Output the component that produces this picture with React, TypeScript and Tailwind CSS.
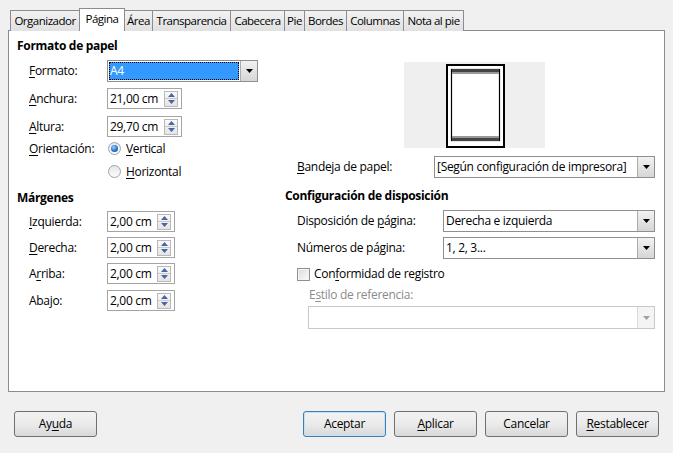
import React from "react";

const U = ({ c }: { c: string }) => (
  <span className="underline underline-offset-[2px] decoration-1">{c}</span>
);

const Arrow = ({ color = "#000" }: { color?: string }) => (
  <svg width="7" height="4" viewBox="0 0 7 4">
    <path d="M0 0H7L3.5 4Z" fill={color} />
  </svg>
);

const DropBtn = ({ disabled = false }: { disabled?: boolean }) => (
  <div
    className={`w-[17px] h-full flex items-center justify-center border-l ${
      disabled ? "border-[#d9d9d9] bg-[#f4f4f4]" : "border-[#acacac] bg-gradient-to-b from-[#f2f2f2] to-[#d6d6d6]"
    }`}
  >
    <Arrow color={disabled ? "#a0a0a0" : "#000"} />
  </div>
);

const Select = ({
  value,
  w,
  h = 22,
  disabled = false,
}: {
  value: string;
  w: string;
  h?: number;
  disabled?: boolean;
}) => (
  <div
    className={`${w} flex items-stretch border bg-white ${disabled ? "border-[#c8c8c8]" : "border-[#8e8f8f]"}`}
    style={{ height: h }}
  >
    <div className="flex-1 flex items-center pl-[2px] whitespace-nowrap overflow-hidden">{value}</div>
    <DropBtn disabled={disabled} />
  </div>
);

const Spin = ({ value, w }: { value: string; w: string }) => (
  <div className={`${w} h-[21px] flex items-center border border-[#a4a4a4] bg-white pl-[2px] pr-[3px]`}>
    <div className="flex-1 whitespace-nowrap">{value}</div>
    <div className="w-[14px] h-[16px] flex flex-col border border-[#b9b9b9] bg-gradient-to-b from-[#fafafa] to-[#e4e4e4]">
      <div className="flex-1 flex items-center justify-center border-b border-[#c9c9c9]">
        <svg width="7" height="4" viewBox="0 0 7 4">
          <path d="M0 4H7L3.5 0Z" fill="#4b64a3" />
        </svg>
      </div>
      <div className="flex-1 flex items-center justify-center">
        <Arrow color="#4b64a3" />
      </div>
    </div>
  </div>
);

const Radio = ({ checked }: { checked: boolean }) => (
  <div className="w-[13px] h-[13px] rounded-full border border-[#a2a2a2] bg-gradient-to-b from-[#e6e6e6] to-[#fbfbfb] flex items-center justify-center">
    {checked && (
      <div className="w-[7px] h-[7px] rounded-full bg-[radial-gradient(circle_at_40%_35%,#9fd3ff_0%,#2a79d6_50%,#0e3f8a_100%)]" />
    )}
  </div>
);

const Row = ({ top, h, children, className = "" }: { top: number; h: number; children: React.ReactNode; className?: string }) => (
  <div className={`flex items-center ${className}`} style={{ marginTop: top, height: h }}>
    {children}
  </div>
);

const Btn = ({ children, focus = false }: { children: React.ReactNode; focus?: boolean }) => (
  <div
    className={`w-[83px] h-[26px] rounded-[3px] border flex items-center justify-center bg-gradient-to-b from-[#f2f2f2] via-[#ebebeb] to-[#d8d8d8] ${
      focus ? "border-[#3c7fb1] shadow-[inset_0_0_0_1px_#bfe4f9]" : "border-[#707070]"
    }`}
  >
    {children}
  </div>
);

const tabs: [string, number][] = [
  ["Organizador", 70],
  ["Página", 44],
  ["Área", 29],
  ["Transparencia", 79],
  ["Cabecera", 55],
  ["Pie", 21],
  ["Bordes", 43],
  ["Columnas", 58],
  ["Nota al pie", 61],
];

export default function App() {
  return (
    <div
      className="w-[673px] h-[453px] bg-[#f0f0f0] text-[12px] text-black overflow-hidden"
      style={{ fontFamily: '"Segoe UI", "Open Sans", sans-serif', letterSpacing: "-0.3px" }}
    >
      {/* tabs */}
      <div className="flex items-end h-[31px] pl-[10px] pt-[8px] text-[11.5px] tracking-[-0.5px]">
        {tabs.map(([t, w], i) =>
          i === 1 ? (
            <div
              key={t}
              className="h-[23px] -mx-[1px] relative z-10 bg-white border border-b-0 border-[#898c95] flex items-center justify-center pb-[2px] whitespace-nowrap"
              style={{ width: w + 2 }}
            >
              {t}
            </div>
          ) : (
            <div
              key={t}
              className="h-[21px] border border-b-0 border-[#898c95] bg-gradient-to-b from-[#f2f2f2] to-[#e1e1e1] flex items-center justify-center whitespace-nowrap overflow-hidden"
              style={{ width: w, marginLeft: i === 0 ? 0 : i === 2 ? 0 : -1 }}
            >
              {t}
            </div>
          )
        )}
      </div>
      {/* panel */}
      <div className="ml-[8px] w-[657px] h-[362px] -mt-px bg-white border border-[#898c95] flex">
        {/* left column */}
        <div className="w-[276px] flex flex-col pl-[8px]">
          <Row top={7} h={16} className="font-bold">Formato de papel</Row>
          <Row top={6} h={22} className="pl-[12px]">
            <div className="w-[78px]"><U c="F" />ormato:</div>
            <div className="w-[151px] h-[22px] flex items-stretch border border-[#8e8f8f] bg-white">
              <div className="flex-1 m-[1px] bg-[#3399ff] outline-1 outline-dotted outline-[#000] -outline-offset-1 text-white flex items-center pl-[1px]">
                A4
              </div>
              <DropBtn />
            </div>
          </Row>
          <Row top={6} h={21} className="pl-[12px]">
            <div className="w-[78px]"><U c="A" />nchura:</div>
            <Spin value="21,00 cm" w="w-[75px]" />
          </Row>
          <Row top={7} h={21} className="pl-[12px]">
            <div className="w-[78px]"><U c="A" />ltura:</div>
            <Spin value="29,70 cm" w="w-[75px]" />
          </Row>
          <Row top={1} h={21} className="pl-[12px]">
            <div className="w-[79px]"><U c="O" />rientación:</div>
            <Radio checked />
            <span className="ml-[5px]"><U c="V" />ertical</span>
          </Row>
          <Row top={2} h={21} className="pl-[91px]">
            <Radio checked={false} />
            <span className="ml-[5px]"><U c="H" />orizontal</span>
          </Row>
          <Row top={8} h={16} className="font-bold">Márgenes</Row>
          <Row top={5} h={21} className="pl-[12px]">
            <div className="w-[78px]"><U c="I" />zquierda:</div>
            <Spin value="2,00 cm" w="w-[68px]" />
          </Row>
          <Row top={5} h={21} className="pl-[12px]">
            <div className="w-[78px]"><U c="D" />erecha:</div>
            <Spin value="2,00 cm" w="w-[68px]" />
          </Row>
          <Row top={5} h={21} className="pl-[12px]">
            <div className="w-[78px]">A<U c="r" />riba:</div>
            <Spin value="2,00 cm" w="w-[68px]" />
          </Row>
          <Row top={6} h={21} className="pl-[12px]">
            <div className="w-[78px]">Aba<U c="j" />o:</div>
            <Spin value="2,00 cm" w="w-[68px]" />
          </Row>
        </div>
        {/* right column */}
        <div className="flex-1 flex flex-col pr-[9px]">
          <div className="ml-[119px] mt-[31px] w-[141px] h-[86px] bg-[#efefef]">
            <svg width="141" height="86" viewBox="0 0 141 86">
              <rect x="43" y="3" width="57" height="82" fill="#fff" stroke="#000" strokeWidth="2" />
              <rect x="47.5" y="7.5" width="48" height="71" fill="#fff" stroke="#000" strokeWidth="1.2" />
              <rect x="48" y="7" width="47" height="3" fill="#444" />
              <rect x="48" y="10" width="47" height="2" fill="#999" />
              <rect x="48" y="74" width="47" height="2" fill="#999" />
              <rect x="48" y="76" width="47" height="3" fill="#444" />
            </svg>
          </div>
          <Row top={8} h={22} className="pl-[12px]">
            <div className="w-[137px]"><U c="B" />andeja de papel:</div>
            <Select value="[Según configuración de impresora]" w="flex-1" />
          </Row>
          <Row top={10} h={16} className="font-bold">Configuración de disposición</Row>
          <Row top={6} h={22} className="pl-[12px]">
            <div className="w-[146px]">Disposición de <U c="p" />ágina:</div>
            <Select value="Derecha e izquierda" w="flex-1" />
          </Row>
          <Row top={5} h={22} className="pl-[12px]">
            <div className="w-[146px]">Números de pá<U c="g" />ina:</div>
            <Select value="1, 2, 3..." w="flex-1" />
          </Row>
          <Row top={5} h={20} className="pl-[12px]">
            <div className="w-[13px] h-[13px] border border-[#8f8f8f] bg-gradient-to-br from-[#dcdcdc] to-[#fbfbfb] shadow-[inset_0_0_0_1px_#f4f4f4]" />
            <span className="ml-[4px]">Con<U c="f" />ormidad de registro</span>
          </Row>
          <Row top={3} h={16} className="pl-[24px] text-[#8b8b8b]">
            E<U c="s" />tilo de referencia:
          </Row>
          <div className="pl-[23px] mt-[3px]">
            <Select value="" w="w-full" h={23} disabled />
          </div>
        </div>
      </div>
      {/* buttons */}
      <div className="flex items-center mt-[19px] pl-[14px] pr-[14px]">
        <Btn>Ay<U c="u" />da</Btn>
        <div className="flex-1" />
        <div className="flex gap-[8px]">
          <Btn focus>Aceptar</Btn>
          <Btn><U c="A" />plicar</Btn>
          <Btn>Cancelar</Btn>
          <Btn><U c="R" />establecer</Btn>
        </div>
      </div>
    </div>
  );
}
